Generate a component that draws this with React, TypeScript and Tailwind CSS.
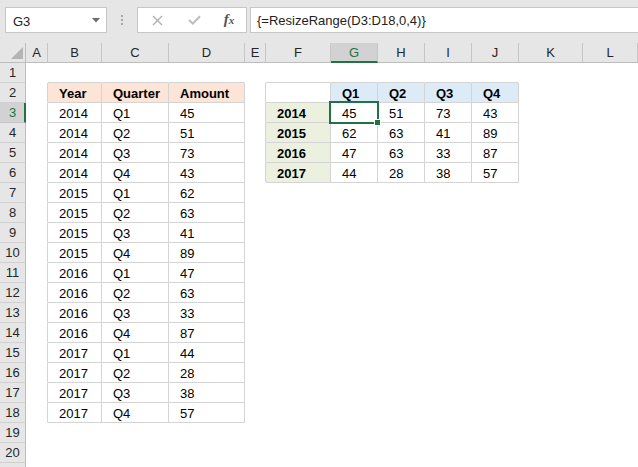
import React from "react";

const COLS: { letter: string; w: string }[] = [
  { letter: "A", w: "w-[22px]" },
  { letter: "B", w: "w-[54px]" },
  { letter: "C", w: "w-[67px]" },
  { letter: "D", w: "w-[76px]" },
  { letter: "E", w: "w-[21px]" },
  { letter: "F", w: "w-[65px]" },
  { letter: "G", w: "w-[47px]" },
  { letter: "H", w: "w-[47px]" },
  { letter: "I", w: "w-[47px]" },
  { letter: "J", w: "w-[47px]" },
  { letter: "K", w: "w-[64px]" },
  { letter: "L", w: "w-[55px]" },
];

const amounts = [45, 51, 73, 43, 62, 63, 41, 89, 47, 63, 33, 87, 44, 28, 38, 57];
const years = [2014, 2015, 2016, 2017];

type Cell = { text?: string; bold?: boolean; bg?: string };

function buildCells(): Record<string, Cell> {
  const m: Record<string, Cell> = {};
  const peach = "bg-[#fce4d6]";
  m["2,1"] = { text: "Year", bold: true, bg: peach };
  m["2,2"] = { text: "Quarter", bold: true, bg: peach };
  m["2,3"] = { text: "Amount", bold: true, bg: peach };
  for (let i = 0; i < 16; i++) {
    const r = 3 + i;
    m[`${r},1`] = { text: String(years[Math.floor(i / 4)]) };
    m[`${r},2`] = { text: "Q" + ((i % 4) + 1) };
    m[`${r},3`] = { text: String(amounts[i]) };
  }
  m["2,5"] = {};
  for (let q = 0; q < 4; q++) {
    m[`2,${6 + q}`] = { text: "Q" + (q + 1), bold: true, bg: "bg-[#ddebf7]" };
  }
  for (let y = 0; y < 4; y++) {
    m[`${3 + y},5`] = { text: String(years[y]), bold: true, bg: "bg-[#ebf1de]" };
    for (let q = 0; q < 4; q++) {
      m[`${3 + y},${6 + q}`] = { text: String(amounts[y * 4 + q]) };
    }
  }
  return m;
}

const CELLS = buildCells();

function inTable(r: number, c: number) {
  if (c >= 1 && c <= 3 && r >= 2 && r <= 18) return true;
  if (c >= 5 && c <= 9 && r >= 2 && r <= 6) return true;
  return false;
}

function Toolbar() {
  return (
    <div className="h-[43px] bg-[#e6e6e6] flex items-start pt-[7px] pl-[5px]">
      <div className="w-[102px] h-[26px] bg-white border border-[#c6c6c6] flex items-center justify-between pl-[7px] pr-[6px]">
        <span className="text-[13px] leading-[19px] pt-[2px] text-[#222]">G3</span>
        <svg width="8" height="5" viewBox="0 0 8 5">
          <path d="M0 0 L8 0 L4 4.5 Z" fill="#6e6e6e" />
        </svg>
      </div>
      <div className="w-[30px] h-[26px] flex flex-col items-center justify-center gap-[2px]">
        <span className="w-[2px] h-[2px] bg-[#a6a6a6]" />
        <span className="w-[2px] h-[2px] bg-[#a6a6a6]" />
        <span className="w-[2px] h-[2px] bg-[#a6a6a6]" />
      </div>
      <div className="w-[110px] h-[26px] bg-white border border-[#c6c6c6] flex items-center">
        <div className="w-[38px] flex justify-center">
          <svg width="11" height="11" viewBox="0 0 11 11">
            <path d="M1 1 L10 10 M10 1 L1 10" stroke="#b0b0b0" strokeWidth="1.4" />
          </svg>
        </div>
        <div className="w-[36px] flex justify-center">
          <svg width="13" height="10" viewBox="0 0 13 10">
            <path d="M1 5 L4.8 8.6 L12 1.2" stroke="#bdbdbd" strokeWidth="2" fill="none" />
          </svg>
        </div>
        <div className="w-[34px] flex justify-center">
          <span className="font-['Liberation_Serif'] italic text-[15px] leading-[15px] text-[#555] font-bold">
            f<span className="text-[11px]">x</span>
          </span>
        </div>
      </div>
      <div className="ml-[3px] flex-1 h-[26px] bg-white border-y border-l border-[#c6c6c6] flex items-center pl-[6px]">
        <span className="text-[13px] leading-[19px] pt-[1px] text-[#222]">
          {"{=ResizeRange(D3:D18,0,4)}"}
        </span>
      </div>
    </div>
  );
}

function HeaderRow() {
  return (
    <div className="flex h-[20px]">
      <div className="w-[26px] h-[20px] bg-[#e6e6e6] border-r border-b border-[#bdbdbd] flex items-end justify-end pr-[2px] pb-[3px]">
        <svg width="12" height="12" viewBox="0 0 12 12">
          <path d="M12 0 L12 12 L0 12 Z" fill="#b4b4b4" />
        </svg>
      </div>
      {COLS.map((c) =>
        c.letter === "G" ? (
          <div
            key={c.letter}
            className={`${c.w} h-[20px] shrink-0 bg-[#d2d2d2] border-r border-r-[#c6c6c6] border-b-2 border-b-[#217346] text-center text-[13px] leading-[19px] text-[#217346]`}
          >
            {c.letter}
          </div>
        ) : (
          <div
            key={c.letter}
            className={`${c.w} h-[20px] shrink-0 bg-[#e6e6e6] border-r border-r-[#c6c6c6] border-b border-b-[#bdbdbd] text-center text-[13px] leading-[19px] text-[#262626]`}
          >
            {c.letter}
          </div>
        )
      )}
    </div>
  );
}

function Row({ r }: { r: number }) {
  const selected = r === 3;
  const label = r <= 20 ? String(r) : "";
  return (
    <div className="flex h-[20px]">
      {selected ? (
        <div className="w-[26px] h-[20px] shrink-0 bg-[#d2d2d2] border-r-2 border-r-[#217346] border-b border-b-[#c6c6c6] text-center text-[13px] leading-[19px] text-[#217346] pl-[1px]">
          {label}
        </div>
      ) : (
        <div className="w-[26px] h-[20px] shrink-0 bg-[#e6e6e6] border-r border-r-[#bdbdbd] border-b border-b-[#d0d0d0] text-center text-[13px] leading-[19px] text-[#262626]">
          {label}
        </div>
      )}
      {COLS.map((c, ci) => {
        const cell = CELLS[`${r},${ci}`];
        const rightGray = inTable(r, ci) || inTable(r, ci + 1);
        const bottomGray = inTable(r, ci) || inTable(r + 1, ci);
        const rc = rightGray ? "border-r-[#d4d4d4]" : "border-r-white";
        const bc = bottomGray ? "border-b-[#d4d4d4]" : "border-b-white";
        const bg = cell?.bg ?? "bg-white";
        return (
          <div
            key={ci}
            className={`${c.w} h-[20px] shrink-0 border-r border-b ${rc} ${bc} ${bg} pl-[11px] text-[13px] leading-[21px] text-black whitespace-nowrap overflow-visible ${cell?.bold ? "font-bold" : ""}`}
          >
            {cell?.text ?? ""}
          </div>
        );
      })}
    </div>
  );
}

export default function App() {
  const rows = Array.from({ length: 21 }, (_, i) => i + 1);
  return (
    <div className="w-[638px] h-[467px] overflow-hidden bg-white relative font-['Liberation_Sans',Arial,sans-serif]">
      <Toolbar />
      <HeaderRow />
      <div>
        {rows.map((r) => (
          <Row key={r} r={r} />
        ))}
      </div>
      {/* active cell selection G3 */}
      <div className="absolute left-[329px] top-[101px] w-[50px] h-[23px] border-2 border-[#217346] pointer-events-none" />
      <div className="absolute left-[374px] top-[119px] w-[7px] h-[7px] bg-[#217346] border border-white pointer-events-none" />
    </div>
  );
}
